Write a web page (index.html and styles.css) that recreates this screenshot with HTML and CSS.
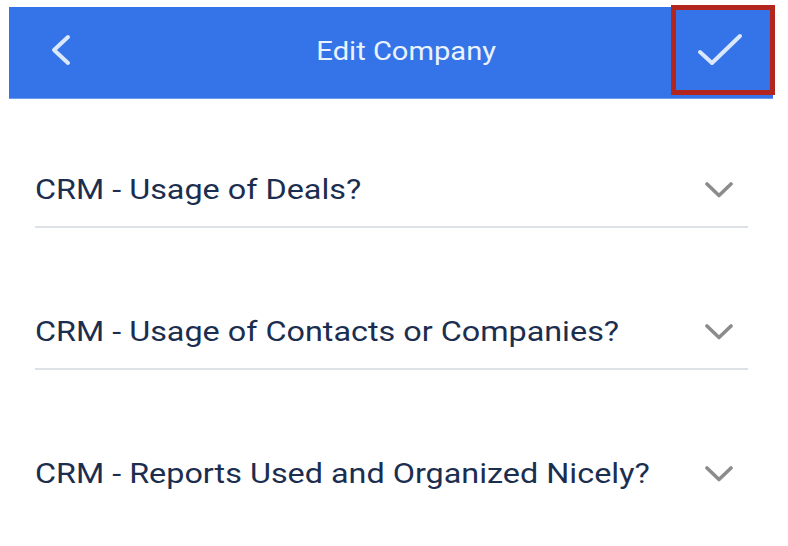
FILE: index.html
```html
<!DOCTYPE html>
<html>
<head>
<meta charset="utf-8">
<link rel="stylesheet" href="styles.css">
</head>
<body>
<div class="page">
  <header class="appbar">
    <button class="icon-btn back" aria-label="Back">
      <svg width="30" height="40" viewBox="0 0 30 40"><polyline points="22,4 8,17 22,30" fill="none" stroke="#dbe8fc" stroke-width="4" stroke-linecap="round" stroke-linejoin="round"/></svg>
    </button>
    <h1 class="title"><span class="title-text">Edit Company</span></h1>
    <button class="icon-btn save" aria-label="Save">
      <svg width="50" height="40" viewBox="0 0 50 40"><polyline points="4,21 16,32 44,5" fill="none" stroke="#dbe8fc" stroke-width="4" stroke-linecap="round" stroke-linejoin="round"/></svg>
    </button>
    <div class="highlight"></div>
  </header>
  <ul class="fields">
    <li class="field"><span class="label">CRM - Usage of Deals?</span><svg class="chev" width="30" height="18" viewBox="0 0 30 18"><polyline points="2,3 14,14.5 26,3" fill="none" stroke="#8c8c8c" stroke-width="3.6" stroke-linecap="round" stroke-linejoin="round"/></svg></li>
    <li class="field"><span class="label">CRM - Usage of Contacts or Companies?</span><svg class="chev" width="30" height="18" viewBox="0 0 30 18"><polyline points="2,3 14,14.5 26,3" fill="none" stroke="#8c8c8c" stroke-width="3.6" stroke-linecap="round" stroke-linejoin="round"/></svg></li>
    <li class="field last"><span class="label">CRM - Reports Used and Organized Nicely?</span><svg class="chev" width="30" height="18" viewBox="0 0 30 18"><polyline points="2,3 14,14.5 26,3" fill="none" stroke="#8c8c8c" stroke-width="3.6" stroke-linecap="round" stroke-linejoin="round"/></svg></li>
  </ul>
</div>
</body>
</html>
```
FILE: styles.css
```css
html, body {
  margin: 0;
  padding: 0;
  background: #ffffff;
}
body {
  font-family: Roboto, "Liberation Sans", sans-serif;
  width: 788px;
  height: 546px;
  overflow: hidden;
}
.page {
  padding-top: 7px;
}
.appbar {
  position: relative;
  margin: 0 15px 0 9px;
  height: 91px;
  background: #3474e8;
  border-bottom: 1px solid #6a9cec;
  display: grid;
  grid-template-columns: 100px 1fr 100px;
  align-items: center;
}
.icon-btn {
  background: none;
  border: 0;
  padding: 0;
  display: flex;
  align-items: center;
}
.back {
  padding-left: 37px;
  margin-top: 0;
}
.save {
  justify-content: flex-end;
  padding-right: 27px;
  margin-top: -3px;
}
.title {
  margin: 0;
  padding-left: 30px;
  text-align: center;
  font-weight: 400;
  font-size: 26px;
  color: #eaf2fe;
  margin-top: -4px;
}
.title-text {
  display: inline-block;
  transform: scaleX(1.12);
}
.highlight {
  position: absolute;
  left: 662px;
  top: -2px;
  width: 94px;
  height: 80px;
  border: 5px solid #b3261e;
}
.fields {
  list-style: none;
  margin: 0;
  padding: 0 40px 0 35px;
  display: flex;
  flex-direction: column;
  gap: 13px;
}
.field {
  display: flex;
  align-items: center;
  justify-content: space-between;
  padding: 74px 0 19px;
  border-bottom: 2px solid #dde2e8;
  line-height: 34px;
}
.field.last {
  border-bottom-color: transparent;
}
.label {
  display: inline-block;
  font-size: 28px;
  color: #1c2e4f;
  transform: scaleX(1.155);
  transform-origin: left center;
}
.chev {
  margin-right: 13px;
  margin-top: 0;
}
```
